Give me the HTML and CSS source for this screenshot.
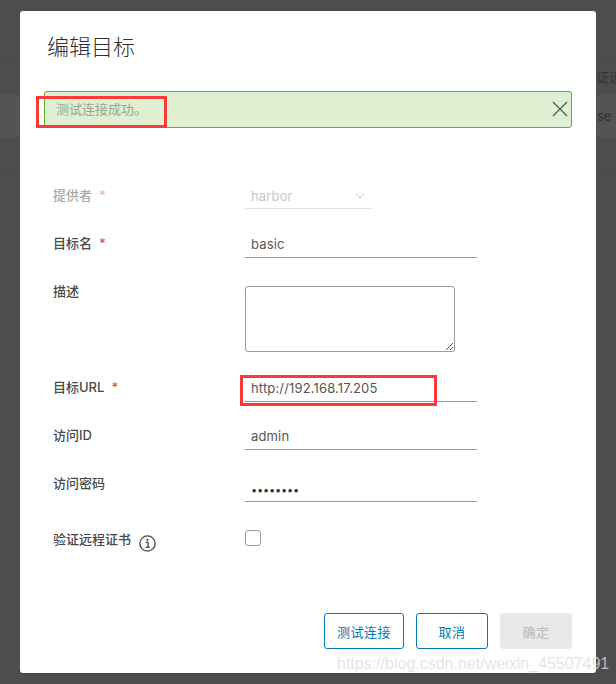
FILE: index.html
```html
<!DOCTYPE html>
<html lang="zh">
<head>
<meta charset="utf-8">
<title>编辑目标</title>
<link rel="stylesheet" href="styles.css">
</head>
<body>
<div class="backdrop">
  <div class="bg-row bg-row-a"></div>
  <div class="bg-row bg-row-b"></div>
  <div class="bg-row bg-row-c"></div>
  <span class="bg-text bg-text-a">证远</span>
  <span class="bg-text bg-text-b">se</span>
  <main class="modal">
    <h1 class="title">编辑目标</h1>
    <div class="alert">
      <span class="alert-text">测试连接成功。</span>
      <svg class="alert-close" width="16" height="16" viewBox="0 0 16 16"><path d="M1 1l14 14M15 1L1 15" fill="none" stroke="#565656" stroke-width="1.3"/></svg>
    </div>
    <form class="form">
      <div class="row row-provider disabled">
        <label class="label">提供者<span class="req">*</span></label>
        <div class="select"><span>harbor</span>
          <svg width="10" height="6" viewBox="0 0 10 6"><path d="M1 1l4 4 4-4" fill="none" stroke="#c8c8c8" stroke-width="1"/></svg>
        </div>
      </div>
      <div class="row">
        <label class="label">目标名<span class="req">*</span></label>
        <div class="input">basic</div>
      </div>
      <div class="row row-desc">
        <label class="label">描述</label>
        <div class="textarea">
          <svg class="grip" width="9" height="9" viewBox="0 0 9 9"><path d="M1 8l7-7M5 8l3-3" stroke="#555" stroke-width="1" fill="none"/></svg>
        </div>
      </div>
      <div class="row">
        <label class="label">目标URL<span class="req">*</span></label>
        <div class="input">http://192.168.17.205</div>
      </div>
      <div class="row">
        <label class="label">访问ID</label>
        <div class="input">admin</div>
      </div>
      <div class="row row-pass">
        <label class="label">访问密码</label>
        <div class="input input-pass">••••••••</div>
      </div>
      <div class="row row-check">
        <label class="label label-info">验证远程证书
          <svg class="info" width="17" height="17" viewBox="0 0 17 17"><circle cx="8.5" cy="8.5" r="7.6" fill="none" stroke="#4a4a4a" stroke-width="1.4"/><circle cx="8.5" cy="4.9" r="1.1" fill="#4a4a4a"/><path d="M6.6 7.4h2.5v4.6M6.4 12.3h4.4" fill="none" stroke="#4a4a4a" stroke-width="1.3"/></svg>
        </label>
        <div class="check"></div>
      </div>
    </form>
    <div class="actions">
      <button type="button" class="btn btn-test">测试连接</button>
      <button type="button" class="btn btn-cancel">取消</button>
      <button type="button" class="btn btn-ok">确定</button>
    </div>
  </main>
  <div class="mark mark-alert"></div>
  <div class="mark mark-url"></div>
  <div class="watermark">https://blog.csdn.net/weixin_45507491</div>
</div>
</body>
</html>
```

FILE: styles.css
```css
* { box-sizing: border-box; }
html, body { margin: 0; height: 100%; }
body { font-family: Inter, "Noto Sans CJK SC", sans-serif; overflow: hidden; }

.backdrop {
  position: relative;
  width: 616px;
  height: 684px;
  background: #4d4d4d;
  padding: 11px 20px;
  overflow: hidden;
}
.bg-row { position: absolute; left: 0; right: 0; }
.bg-row-a { top: 58px; height: 37px; border-top: 1px solid #474747; }
.bg-row-b { top: 95px; height: 42px; background: #545454; }
.bg-row-c { top: 137px; height: 35px; border-bottom: 1px solid #474747; }
.bg-text { position: absolute; font-size: 13px; color: #333; white-space: nowrap; }
.bg-text-a { left: 596px; top: 67px; }
.bg-text-b { left: 597px; top: 108px; }

.modal {
  position: relative;
  width: 576px;
  height: 662px;
  background: #fff;
  border-radius: 3px;
  padding: 21px 24px 0;
  display: flex;
  flex-direction: column;
}
.title {
  margin: 0 0 0 3px;
  height: 30px;
  font-size: 22px;
  line-height: 30px;
  font-weight: 300;
  color: #313131;
}
.alert {
  margin-top: 29px;
  height: 37px;
  background: #dfefd1;
  border: 1px solid #62b22c;
  border-radius: 3px;
  display: flex;
  align-items: center;
  justify-content: space-between;
  padding: 0 3px 2px 11px;
}
.alert-text { font-size: 13px; color: #98a68e; }

.form { margin-top: 56px; margin-left: 9px; }
.row {
  display: grid;
  grid-template-columns: 192px 232px;
  height: 48px;
  font-size: 13px;
  letter-spacing: 0.15px;
  color: #565656;
}
.row-desc { height: 96px; }
.row-pass { height: 56px; }
.row-check { height: 48px; }
.label {
  font-size: 13px;
  font-weight: 500;
  letter-spacing: 0;
  line-height: 22px;
  color: #4a4a4a;
}
.req { color: #d9574a; margin-left: 7px; }
.input {
  height: 26px;
  padding: 2px 0 0 6px;
  line-height: 21px;
  border-bottom: 1px solid #9a9a9a;
}
.input-pass { height: 30px; padding-top: 8px; font-size: 11px; letter-spacing: -0.2px; color: #333; }
.disabled .label { color: #a9a9a9; }
.disabled .req { color: #efb5ae; }
.select {
  width: 127px;
  height: 25px;
  padding: 0 7px 0 6px;
  border-bottom: 1px solid #e3e3e3;
  color: #c8c8c8;
  line-height: 21px;
  display: flex;
  align-items: center;
  justify-content: space-between;
}
.textarea {
  position: relative;
  width: 210px;
  height: 66px;
  margin-top: 6px;
  border: 1px solid #9a9a9a;
  border-radius: 3px;
}
.grip { position: absolute; right: 0; bottom: 0; }
.label-info { display: flex; align-items: flex-start; }
.info { margin: 7px 0 0 8px; }
.check {
  width: 16px;
  height: 16px;
  margin-top: 2px;
  border: 1px solid #9a9a9a;
  border-radius: 3px;
}
.actions {
  position: absolute;
  right: 24px;
  top: 602px;
  display: flex;
  gap: 12px;
}
.btn {
  height: 36px;
  border: 1px solid #0079b8;
  border-radius: 3px;
  background: #fff;
  color: #0079b8;
  font: 400 13px Inter, "Noto Sans CJK SC", sans-serif;
  letter-spacing: 0.5px;
  padding: 0;
}
.btn-test { width: 80px; }
.btn-cancel { width: 72px; }
.btn-ok { width: 72px; background: #e9e9e9; border-color: #e9e9e9; color: #b9b9b9; }

.mark { position: absolute; border: 3px solid #f83a3a; }
.mark-alert { left: 36px; top: 96px; width: 131px; height: 32px; }
.mark-url { left: 240px; top: 375px; width: 197px; height: 31px; }
.watermark {
  position: absolute;
  left: 337px;
  top: 655px;
  font: 16px "Liberation Sans", sans-serif;
  color: rgba(222, 222, 222, 0.78);
  white-space: nowrap;
}
```
